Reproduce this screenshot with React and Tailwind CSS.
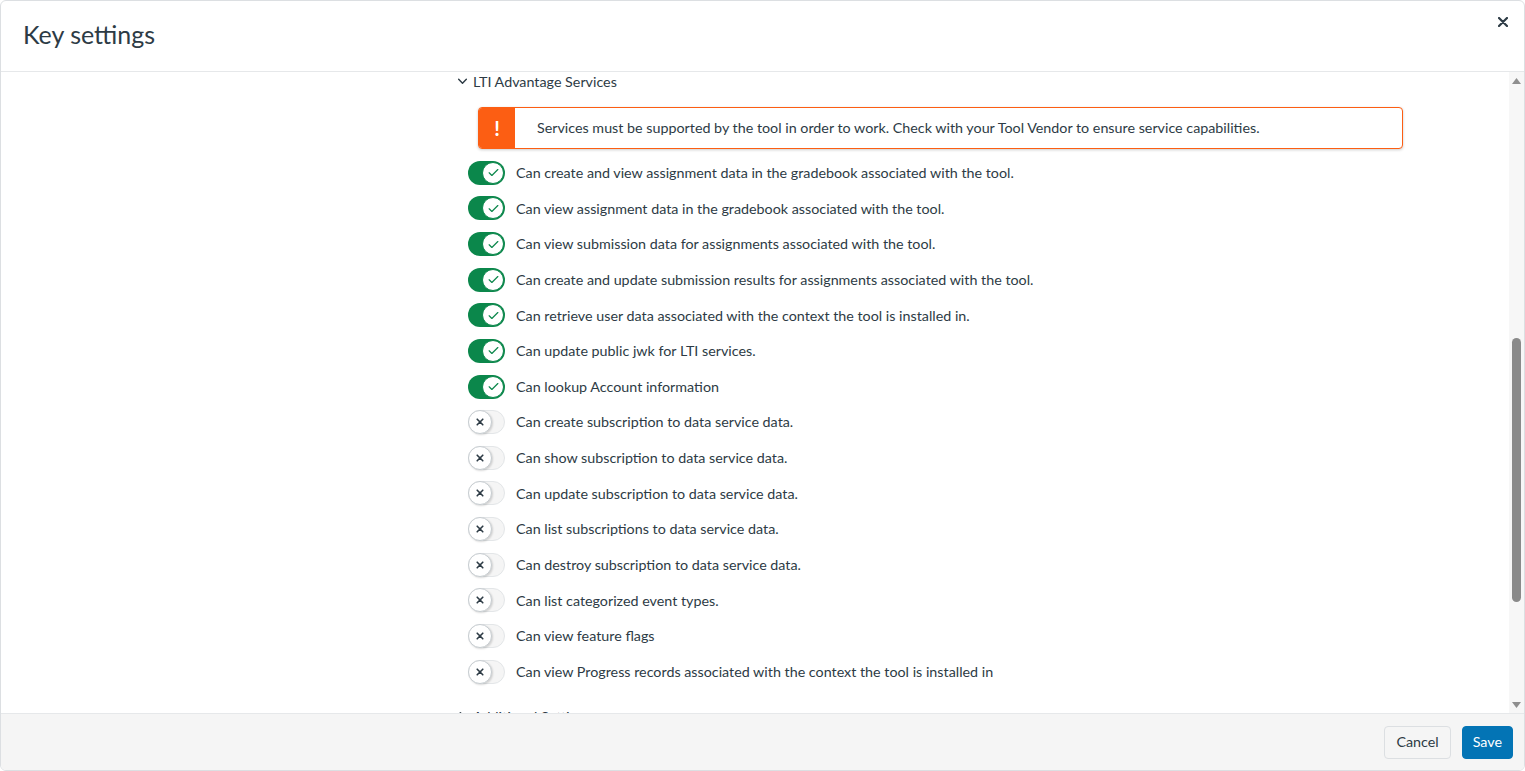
import React from 'react';

const services = [
  { label: 'Can create and view assignment data in the gradebook associated with the tool.', on: true },
  { label: 'Can view assignment data in the gradebook associated with the tool.', on: true },
  { label: 'Can view submission data for assignments associated with the tool.', on: true },
  { label: 'Can create and update submission results for assignments associated with the tool.', on: true },
  { label: 'Can retrieve user data associated with the context the tool is installed in.', on: true },
  { label: 'Can update public jwk for LTI services.', on: true },
  { label: 'Can lookup Account information', on: true },
  { label: 'Can create subscription to data service data.', on: false },
  { label: 'Can show subscription to data service data.', on: false },
  { label: 'Can update subscription to data service data.', on: false },
  { label: 'Can list subscriptions to data service data.', on: false },
  { label: 'Can destroy subscription to data service data.', on: false },
  { label: 'Can list categorized event types.', on: false },
  { label: 'Can view feature flags', on: false },
  { label: 'Can view Progress records associated with the context the tool is installed in', on: false },
];

const Toggle = ({ on }) => {
  if (on) {
    return (
      <div className="w-[37px] h-[24px] rounded-full bg-[#0b874b] flex items-center justify-end pr-[1px] shrink-0">
        <div className="w-[22px] h-[22px] rounded-full bg-white border border-[#0b874b] flex items-center justify-center">
          <svg className="w-[13px] h-[13px]" viewBox="0 0 24 24" fill="none" stroke="#0b874b" strokeWidth={2.2} strokeLinecap="round" strokeLinejoin="round">
            <path d="M4 12.5l5 5L20 6.5" />
          </svg>
        </div>
      </div>
    );
  }
  return (
    <div className="w-[37px] h-[24px] rounded-full bg-[#f5f5f5] border border-[#e3e6e8] flex items-center justify-start shrink-0">
      <div className="w-[24px] h-[24px] -ml-[1px] rounded-full bg-white border border-[#c7cdd1] shadow-[1px_1px_2px_rgba(0,0,0,0.15)] flex items-center justify-center">
        <svg className="w-[8px] h-[8px]" viewBox="0 0 10 10" fill="none" stroke="#2d3b45" strokeWidth={2} strokeLinecap="round">
          <path d="M1.5 1.5l7 7M8.5 1.5l-7 7" />
        </svg>
      </div>
    </div>
  );
};

const App = () => {
  return (
    <div className="h-[771px] w-full bg-white text-[#2d3b45] font-['Lato','Noto_Sans',sans-serif] overflow-hidden">
      <div className="h-full w-full flex flex-col border border-[#dcdfe2] rounded-[6px] overflow-hidden">
        {/* Header */}
        <div className="h-[71px] shrink-0 flex items-center justify-between border-b border-[#e6e8ea] pl-[22px] pr-[16px]">
          <h2 className="text-[25px] leading-none -mt-[4px]">Key settings</h2>
          <svg className="w-[10px] h-[10px] self-start mt-[16px]" viewBox="0 0 10 10" fill="none" stroke="#2d3b45" strokeWidth={2.2} strokeLinecap="round">
            <path d="M1 1l8 8M9 1L1 9" />
          </svg>
        </div>

        {/* Body */}
        <div className="flex-1 flex min-h-0">
          <div className="flex-1 overflow-hidden pl-[456px] text-[14.3px]">
            <div className="h-[19px] flex items-center gap-[5px]">
              <svg className="w-[11px] h-[11px]" viewBox="0 0 10 10" fill="none" stroke="#2d3b45" strokeWidth={1.3} strokeLinecap="round" strokeLinejoin="round">
                <path d="M1.5 3l3.5 3.5L8.5 3" />
              </svg>
              <span>LTI Advantage Services</span>
            </div>

            <div className="ml-[21px] mt-[16px] w-[925px] h-[42px] flex border border-[#fc5e13] rounded-[4px] bg-white shadow-[0_1px_3px_rgba(0,0,0,0.2)] overflow-hidden">
              <div className="w-[36px] bg-[#fc5e13] flex items-center justify-center text-white font-bold text-[20px]">!</div>
              <div className="flex items-center pl-[22px] -mt-[1px]">
                Services must be supported by the tool in order to work. Check with your Tool Vendor to ensure service capabilities.
              </div>
            </div>

            <div className="mt-[6px] flex flex-col">
              {services.map((s) => (
                <div key={s.label} className="h-[35.64px] flex items-center gap-[11px] pl-[11px]">
                  <Toggle on={s.on} />
                  <span>{s.label}</span>
                </div>
              ))}
            </div>

            <div className="mt-[17px] h-[20px] flex items-center gap-[5px]">
              <svg className="w-[11px] h-[11px]" viewBox="0 0 10 10" fill="none" stroke="#2d3b45" strokeWidth={1.3} strokeLinecap="round" strokeLinejoin="round">
                <path d="M3 1.5l3.5 3.5L3 8.5" />
              </svg>
              <span>Additional Settings</span>
            </div>
          </div>

          {/* Scrollbar */}
          <div className="w-[15px] shrink-0 bg-[#f7f7f7] flex flex-col items-center">
            <svg className="w-[9px] h-[6px] mt-[6px]" viewBox="0 0 9 6"><path d="M4.5 0L9 6H0z" fill="#8f8f8f" /></svg>
            <div className="flex-1 w-full flex flex-col items-center pt-[254px] pb-[100px]">
              <div className="w-[9px] flex-1 rounded-full bg-[#8a8a8a]" />
            </div>
            <svg className="w-[9px] h-[6px] mb-[5px]" viewBox="0 0 9 6"><path d="M0 0H9L4.5 6z" fill="#8f8f8f" /></svg>
          </div>
        </div>

        {/* Footer */}
        <div className="h-[57px] shrink-0 bg-[#f5f5f5] border-t border-[#e6e8ea] flex items-center justify-end gap-[11px] pr-[11px]">
          <button className="h-[33px] px-[11px] rounded-[4px] border border-[#dcdfe2] bg-[#f5f5f5] text-[14.3px] text-[#2d3b45]">Cancel</button>
          <button className="h-[33px] px-[10px] rounded-[4px] border border-[#0374b5] bg-[#0374b5] text-[14.3px] text-white">Save</button>
        </div>
      </div>
    </div>
  );
};

export default App;
